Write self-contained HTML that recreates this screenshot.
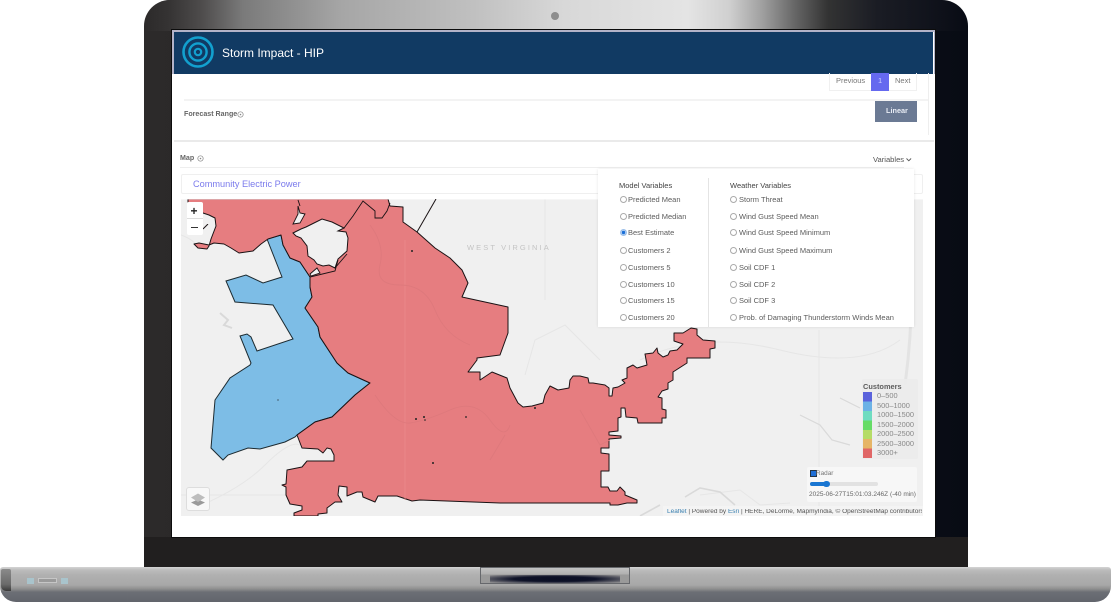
<!DOCTYPE html>
<html lang="en"><head><meta charset="utf-8"><title>Storm Impact - HIP</title>
<style>
html,body{margin:0;padding:0;background:#fff}
body{position:relative;width:1111px;height:602px;overflow:hidden;font-family:"Liberation Sans",sans-serif;filter:blur(.35px)}
.a{position:absolute}
.t{position:absolute;white-space:nowrap;line-height:1;color:#5c5c5c;font-size:7.5px}
.r{position:absolute;width:5px;height:5px;border:.6px solid #aaa;border-radius:50%;background:#fff}
</style></head>
<body>
<!-- bezel -->
<div class="a" style="left:144px;top:0;width:824px;height:568px;border-radius:26px 26px 0 0;overflow:hidden;background:linear-gradient(90deg,#2c2a2a 0,#211f1f 50%,#0d1019 85%,#080b14 100%)">
  <div class="a" style="left:0;top:0;width:824px;height:31px;background:linear-gradient(90deg,rgba(44,42,42,0) 0,#353333 3%,#4e4c4c 7%,#7a7a7a 12%,#a6a6a6 24%,#c0c0c0 40%,#d8d8d8 51%,#e4e4e4 66%,#d0d0d0 71%,#a0a0a0 75%,#666 79%,#333 83%,#1a1c24 89%,rgba(11,14,24,0) 100%)"></div>
  <div class="a" style="left:0;bottom:0;width:824px;height:31px;background:#211f1f"></div>
</div>
<div class="a" style="left:551px;top:12px;width:8px;height:8px;border-radius:50%;background:#8d8d8d"></div>

<!-- screen -->
<div class="a" style="left:172px;top:30px;width:763px;height:507px;background:#fff;overflow:hidden;outline:1px solid #0c0c0c">
  <div class="a" style="left:0;top:0;width:763px;height:2px;background:#b3b3c8"></div>
  <div class="a" style="left:0;top:0;width:1.5px;height:44px;background:#b3b3c8"></div>
  <div class="a" style="right:0;top:0;width:1.5px;height:44px;background:#b3b3c8"></div>
  <div class="a" style="left:2px;top:2px;width:759px;height:42px;background:#113a63"></div>
</div>
<svg class="a" style="left:180px;top:35px" width="36" height="34" viewBox="0 0 36 34">
  <g fill="none" stroke="#12a0cf"><circle cx="18" cy="17" r="14.5" stroke-width="2.6"/><circle cx="18" cy="17" r="8.6" stroke-width="2.4"/><circle cx="18" cy="17" r="3.2" stroke-width="2.2"/></g>
</svg>
<div class="t" style="left:222px;top:46.5px;font-size:12px;color:#fff">Storm Impact - HIP</div>

<!-- pagination -->
<div class="a" style="left:829px;top:73px;width:88px;height:18px;border:1px solid #f0f0f0;border-top:0;box-sizing:border-box"></div>
<div class="t" style="left:836px;top:76.5px;color:#777">Previous</div>
<div class="a" style="left:871px;top:73px;width:18px;height:18px;background:#6569ef"></div>
<div class="t" style="left:878px;top:76.5px;color:#cfd2ff">1</div>
<div class="t" style="left:895px;top:76.5px;color:#777">Next</div>
<div class="a" style="left:184px;top:99px;width:744px;height:2px;background:#f3f3f3"></div>
<div class="a" style="left:928px;top:73px;width:1px;height:62px;background:#eee"></div>
<div class="t" style="left:184px;top:111px;font-size:7.1px;font-weight:bold;color:#666">Forecast Range</div>
<svg class="a" style="left:237px;top:111px" width="7" height="7"><circle cx="3.5" cy="3.5" r="2.7" fill="none" stroke="#888" stroke-width=".7"/><circle cx="3.5" cy="3.5" r=".8" fill="#888"/></svg>
<div class="a" style="left:875px;top:101px;width:42px;height:21px;background:#6b7a94"></div>
<div class="t" style="left:886px;top:107px;color:#e8ecf4;font-weight:bold;font-size:7.3px">Linear</div>
<div class="a" style="left:174px;top:140px;width:760px;height:1.5px;background:#eaeaea"></div>
<div class="t" style="left:180px;top:155px;font-weight:bold;font-size:7.1px;color:#666">Map</div>
<svg class="a" style="left:197px;top:155px" width="7" height="7"><circle cx="3.5" cy="3.5" r="2.7" fill="none" stroke="#888" stroke-width=".7"/><circle cx="3.5" cy="3.5" r=".8" fill="#888"/></svg>
<div class="t" style="left:873px;top:155.5px;font-size:7.6px;color:#555">Variables</div>
<svg class="a" style="left:905px;top:157px" width="8" height="6"><path d="M1.5 1.5L3.8 3.8 6.1 1.5" fill="none" stroke="#555" stroke-width=".9"/></svg>
<div class="a" style="left:180px;top:167px;width:724px;height:1px;background:#eee"></div>
<div class="a" style="left:181px;top:174px;width:742px;height:20px;box-sizing:border-box;border:1px solid #efefef;border-radius:2px;background:#fff"></div>
<div class="t" style="left:193px;top:179.5px;font-size:9.2px;color:#7b7bec">Community Electric Power</div>

<!-- map -->
<svg class="a" style="left:181px;top:199px" width="742" height="317" viewBox="181 199 742 317">
  <rect x="181" y="199" width="742" height="317" fill="#f0f0f0"/>
  <g fill="none" stroke="#e6e6e6" stroke-width="1">
    <path d="M545 199V300M819 330V516M181 495H290"/>
    <path d="M181 235Q195 240 200 250M230 450Q270 440 290 420M190 510Q240 490 265 465T300 445"/>
    <path d="M640 360Q700 330 780 350T900 340M700 495L740 490 760 505 790 503"/>
    <path d="M600 360L565 325 535 340 525 375"/>
  </g>
  <g fill="none" stroke="#d9d9d9" stroke-width="1.2">
    <path d="M800 415L820 425 832 440 850 445M840 398L860 408"/>
    <path d="M685 497L700 488 720 492 735 505M640 516L660 505" stroke-width="1.6"/>
    <path d="M220 313L228 320 224 325 232 328" stroke-width="2"/>
    <path d="M905 200Q918 290 905 385" stroke="#e3e3e3" stroke-width="3"/>
  </g>
  <text x="467" y="250" font-family="Liberation Sans, sans-serif" font-size="7.5" letter-spacing="2.1" fill="#c4c4c4">WEST VIRGINIA</text>

  <!-- blue -->
  <path d="M267 239L281 235 283 245 290 258 300 262 310 277 310 287 312 297 305 308 318 327 320 337 337 363 348 373 370 383 355 395 332 417 315 422 297 435 295 437 285 442 260 449 248 448 228 455 223 460 211 448 215 400 230 378 250 365 251 363 240 336 247 334 251 337 257 351 293 339 273 305 235 302 226 281 246 275 263 283 282 277Z" fill="#7dbde6" stroke="#1c2a30" stroke-width="1"/>

  <!-- red -->
  <path d="M188 199L188 205 203 213 209 215 215 218 216 226 211 239 209 246 207 249 198 248 194 244 199 243 209 245 214 243 224 244 231 248 239 253 253 251 261 244 268 239 281 235 283 245 290 258 300 262 310 277 310 287 312 297 305 308 318 327 320 337 337 363 348 373 370 383 355 395 332 417 315 422 297 435 302 448 318 449 323 453 327 448 331 449 334 455 334 461 307 461 302 467 287 470 286 484 282 485 286 487 286 495 290 504 302 506 302 510 294 513 294 516 318 516 318 514 327 513 327 508 335 502 342 502 338 495 339 486 347 487 347 496 357 492 362 492 363 497 375 502 378 496 397 496 412 501 420 500 500 503 610 503 610 505 618 505 627 503 637 503 637 500 625 495 625 492 620 487 617 491 610 491 608 487 601 487 601 471 609 471 609 454 601 453 601 448 609 448 609 439 621 438 621 436 609 435 609 432 618 431 618 418 621 417 621 408 625 408 626 417 637 418 638 423 662 423 662 418 666 418 666 410 662 409 662 398 658 397 662 391 668 389 668 383 673 380 673 372 687 363 687 358 710 358 710 349 715 348 715 341 703 340 697 335 697 329 691 328 683 333 674 333 674 341 683 344 677 350 670 351 668 355 663 357 658 353 657 348 653 353 645 354 647 365 637 368 633 365 627 368 627 378 622 380 625 383 618 387 613 388 612 396 609 396 609 388 605 385 593 383 589 383 588 378 580 376 573 376 570 380 569 388 558 390 550 386 545 395 543 403 532 406 523 407 518 403 510 388 507 378 492 372 480 380 480 372 468 372 477 360 477 358 500 355 508 333 508 307 485 302 462 297 468 283 462 270 450 258 435 248 417 232 403 222 403 207 390 206 388 199Z" fill="#e67d80" stroke="#1a1214" stroke-width="1" stroke-linejoin="round"/>
  <rect x="181" y="198" width="742" height="1.4" fill="#fff"/>
  <path d="M405 240V500" stroke="#ea8a8c" stroke-width=".8"/>
  <g fill="none" stroke="#de797c" stroke-width=".9">
    <path d="M370 225Q385 245 380 265T400 285 435 310 470 345M375 395Q395 425 410 423T450 410 490 420 510 425M490 460L505 435M580 410L600 445 610 440"/>
  </g>

  <!-- white hole -->
  <path d="M293 233L301 229 306 227 312 224 322 219 332 222 344 228 338 231 346 232 348 238 347 251 338 259 335 268 329 265 323 266 317 264 314 260 308 256 307 246 301 238 296 236Z" fill="#f0f0f0" stroke="#1a1214" stroke-width="1"/>
  <path d="M298 206L300 213 305 214 300 223 293 224 298 214Z" fill="#f0f0f0" stroke="#1a1214" stroke-width=".9"/>
  <path d="M310 274L317 268 320 273 311 276Z" fill="#f0f0f0" stroke="#1a1214" stroke-width=".9"/>
  <path d="M298 200L300 206M344 228L353 216 363 201 375 211 375 218 382 218 387 211 390 203M335 268L347 254M310 277L335 271 338 260" fill="none" stroke="#1a1214" stroke-width=".9"/>
  <path d="M436 199L417 232" fill="none" stroke="#1a1214" stroke-width="1"/>
  <g fill="#222"><circle cx="412" cy="251" r="1"/><circle cx="416" cy="419" r="1"/><circle cx="424" cy="417" r="1"/><circle cx="425" cy="420" r=".8"/><circle cx="433" cy="463" r="1"/><circle cx="466" cy="417" r=".9"/><circle cx="535" cy="408" r="1"/><circle cx="278" cy="400" r=".6"/></g>
</svg>

<!-- zoom control -->
<div class="a" style="left:187px;top:202px;width:16px;height:33px;background:#fff;border-radius:2px"></div>
<div class="a" style="left:187px;top:218px;width:16px;height:1px;background:#ddd"></div>
<div class="t" style="left:190.5px;top:205px;font-size:12px;font-weight:bold;color:#222">+</div>
<div class="a" style="left:191px;top:226.5px;width:7px;height:1.4px;background:#333"></div>
<svg class="a" style="left:203px;top:224px" width="6" height="6"><path d="M0 5L5 0" stroke="#1a1214" stroke-width="1"/></svg>
<!-- layers -->
<div class="a" style="left:186px;top:487px;width:24px;height:24px;background:#f8f8f8;border:1px solid #ddd;border-radius:3px;box-sizing:border-box"></div>
<svg class="a" style="left:190px;top:491px" width="16" height="16"><path d="M8 8.5L15 11.5 8 15 1 11.5Z" fill="#9a9a9a"/><path d="M8 2.5L15 6.5 8 11 1 6.5Z" fill="#bdbdbd"/></svg>

<!-- legend -->
<div class="a" style="left:862px;top:379px;width:56px;height:80px;background:rgba(235,235,235,.9);border-radius:2px"></div>
<div class="t" style="left:863px;top:382.5px;font-size:7.4px;font-weight:bold;color:#5d5d5d">Customers</div>
<div class="a" style="left:863px;top:392px;width:9px;height:66px;background:linear-gradient(#5a62dc 0 14.3%,#6cb2e6 14.3% 28.6%,#6fdcc0 28.6% 42.9%,#66dc66 42.9% 57.2%,#b5dc66 57.2% 71.5%,#e6b566 71.5% 85.8%,#e06666 85.8%)"></div>
<div class="t" style="left:877px;top:392px;font-size:7.4px;color:#888">0–500</div>
<div class="t" style="left:877px;top:401.5px;font-size:7.4px;color:#888">500–1000</div>
<div class="t" style="left:877px;top:411px;font-size:7.4px;color:#888">1000–1500</div>
<div class="t" style="left:877px;top:420.5px;font-size:7.4px;color:#888">1500–2000</div>
<div class="t" style="left:877px;top:430px;font-size:7.4px;color:#888">2000–2500</div>
<div class="t" style="left:877px;top:439.5px;font-size:7.4px;color:#888">2500–3000</div>
<div class="t" style="left:877px;top:449px;font-size:7.4px;color:#888">3000+</div>

<!-- radar -->
<div class="a" style="left:807px;top:467px;width:110px;height:35px;background:#f7f7f7;border-radius:2px"></div>
<div class="a" style="left:809.5px;top:470px;width:5px;height:5px;background:#1f6fd6;border:.5px solid #234"></div>
<div class="t" style="left:816px;top:471px;font-size:6.4px;color:#777">Radar</div>
<div class="a" style="left:810px;top:482px;width:68px;height:3.5px;background:#e2e2e2;border-radius:2px"></div>
<div class="a" style="left:810px;top:482px;width:16px;height:3.5px;background:#1976d2;border-radius:2px"></div>
<div class="a" style="left:823px;top:480.5px;width:6.5px;height:6.5px;background:#1976d2;border-radius:50%"></div>
<div class="t" style="left:809px;top:491.5px;font-size:6.5px;color:#666">2025-06-27T15:01:03.246Z (-40 min)</div>

<!-- attribution -->
<div class="a" style="left:663px;top:506px;width:260px;height:10px;background:rgba(245,245,245,.8)"></div>
<div class="t" style="left:667px;top:508.5px;font-size:6.5px;color:#555;width:255px;overflow:hidden"><span style="color:#3a80b0">Leaflet</span> | Powered by <span style="color:#3a80b0">Esri</span> | HERE, DeLorme, MapmyIndia, © OpenStreetMap contributors</div>

<!-- dropdown -->
<div class="a" style="left:598px;top:169px;width:316px;height:158px;background:#fff;box-shadow:0 0 3px rgba(0,0,0,.1)"></div>
<div class="a" style="left:708px;top:178px;width:1px;height:149px;background:#e4e4e4"></div>
<div class="t" style="left:619px;top:182px;color:#444">Model Variables</div>
<div class="t" style="left:730px;top:182px;color:#444">Weather Variables</div>

<div class="r" style="left:620px;top:196px"></div><div class="t" style="left:628px;top:195.5px">Predicted Mean</div>
<div class="r" style="left:620px;top:212.5px"></div><div class="t" style="left:628px;top:212.5px">Predicted Median</div>
<div class="r" style="left:620px;top:229px;background:#1a6fd8;border-color:#9cc0ea;box-shadow:inset 0 0 0 .8px #cfe0f5"></div><div class="t" style="left:628px;top:229px">Best Estimate</div>
<div class="r" style="left:620px;top:246.5px"></div><div class="t" style="left:628px;top:246.5px">Customers 2</div>
<div class="r" style="left:620px;top:263.5px"></div><div class="t" style="left:628px;top:263.5px">Customers 5</div>
<div class="r" style="left:620px;top:280.5px"></div><div class="t" style="left:628px;top:280.5px">Customers 10</div>
<div class="r" style="left:620px;top:297px"></div><div class="t" style="left:628px;top:297px">Customers 15</div>
<div class="r" style="left:620px;top:314px"></div><div class="t" style="left:628px;top:314px">Customers 20</div>

<div class="r" style="left:730px;top:196px"></div><div class="t" style="left:739px;top:195.5px">Storm Threat</div>
<div class="r" style="left:730px;top:212.5px"></div><div class="t" style="left:739px;top:212.5px">Wind Gust Speed Mean</div>
<div class="r" style="left:730px;top:229px"></div><div class="t" style="left:739px;top:229px">Wind Gust Speed Minimum</div>
<div class="r" style="left:730px;top:246.5px"></div><div class="t" style="left:739px;top:246.5px">Wind Gust Speed Maximum</div>
<div class="r" style="left:730px;top:263.5px"></div><div class="t" style="left:739px;top:263.5px">Soil CDF 1</div>
<div class="r" style="left:730px;top:280.5px"></div><div class="t" style="left:739px;top:280.5px">Soil CDF 2</div>
<div class="r" style="left:730px;top:297px"></div><div class="t" style="left:739px;top:297px">Soil CDF 3</div>
<div class="r" style="left:730px;top:314px"></div><div class="t" style="left:739px;top:314px">Prob. of Damaging Thunderstorm Winds Mean</div>

<!-- base -->
<div class="a" style="left:0;top:567px;width:1111px;height:35px;border-radius:3px 3px 16px 16px;background:linear-gradient(#d4d4d4 0,#bcbcbc 3px,#b0b0b0 8px,#a8a8a8 18px,#8e8e8e 22px,#6c6f75 25px,#62656c 35px)"></div>
<div class="a" style="left:1px;top:569px;width:10px;height:22px;background:linear-gradient(#8a8a8a,#6a6a6a 70%,#3a3a3a);border-radius:2px 2px 0 5px"></div>
<div class="a" style="left:27px;top:578px;width:7px;height:6px;background:#a9c4cc"></div>
<div class="a" style="left:38px;top:578px;width:19px;height:5px;border:1px solid #c6c6c6;background:#9a9a9a;box-sizing:border-box"></div>
<div class="a" style="left:61px;top:578px;width:7px;height:6px;background:#a9c4cc"></div>
<div class="a" style="left:480px;top:567px;width:150px;height:17px;box-sizing:border-box;border:1px solid #66686c;background:linear-gradient(#c2c2c2 0,#b0b0b0 6px,#9a9a9a 7px,#9a9a9a 100%)"></div>
<div class="a" style="left:490px;top:575px;width:130px;height:8px;background:radial-gradient(ellipse at center,#0a0e24 0,#0e1228 45%,rgba(90,90,100,.6) 85%,rgba(150,150,150,0) 100%)"></div>
</body></html>
